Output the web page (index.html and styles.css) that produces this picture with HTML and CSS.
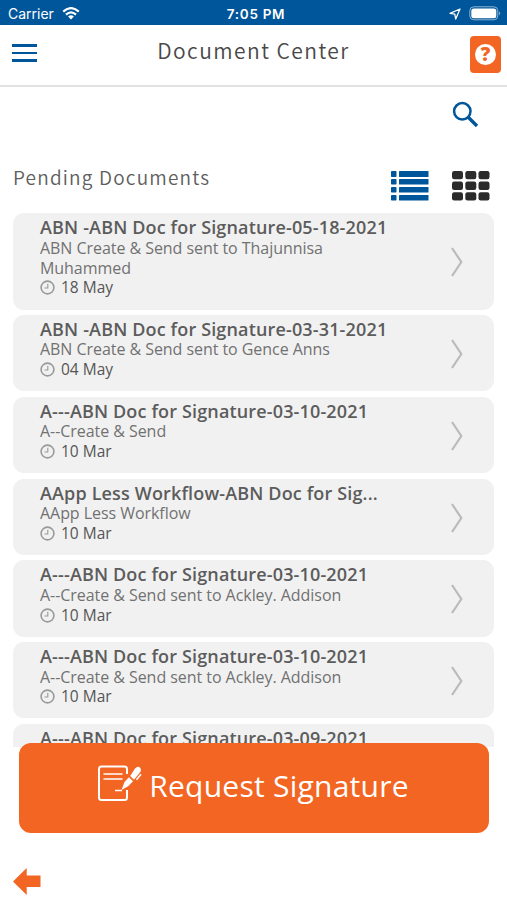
FILE: index.html
```html
<!DOCTYPE html>
<html lang="en">
<head>
    <meta charset="UTF-8">
    <meta name="viewport" content="width=device-width, initial-scale=1.0">
    <title>Document Center</title>
    <link rel="stylesheet" href="styles.css">
</head>
<body>
    <div class="status-bar">
        <div class="status-left">
            <span class="carrier">Carrier</span>
            <svg class="wifi" width="18" height="13" viewBox="0 0 18 13" fill="none" stroke="#fff" stroke-width="2.2">
                <path d="M1.2 4.6Q9-2.4 16.8 4.6"/>
                <path d="M4 7.6Q9 3.2 14 7.6"/>
                <path d="M9 12.4L6.1 9.5Q9 7.1 11.9 9.5Z" fill="#fff" stroke="none"/>
            </svg>
        </div>
        <span class="time">7:05 PM</span>
        <div class="status-right">
            <svg width="12" height="12" viewBox="0 0 12 12" fill="none" stroke="#fff" stroke-width="1.3" stroke-linejoin="round"><path d="M11 1L1 5.3L5.8 6.1L6.7 11Z"/></svg>
            <svg width="32" height="15" viewBox="0 0 32 15">
                <rect x="0.8" y="0.8" width="28" height="13" rx="4" fill="none" stroke="#fff" stroke-opacity=".55" stroke-width="1"/>
                <rect x="2.3" y="2.4" width="25" height="9.8" rx="2.5" fill="#fff"/>
                <path d="M30.2 5.2Q32.2 7.3 30.2 9.4Z" fill="#fff" fill-opacity=".6"/>
            </svg>
        </div>
    </div>

    <header class="header">
        <div class="menu">
            <span></span>
            <span></span>
            <span></span>
        </div>
        <h1>Document Center</h1>
        <div class="help"><span>?</span></div>
    </header>

    <div class="search-row">
        <svg width="27" height="27" viewBox="0 0 27 27" fill="none" stroke="#00569a">
            <circle cx="10.3" cy="10.3" r="8.2" stroke-width="2.5"/>
            <path d="M16 16L25 25" stroke-width="3.4"/>
        </svg>
    </div>

    <div class="list-header">
        <h2>Pending Documents</h2>
        <div class="views">
            <svg width="38" height="30" viewBox="0 0 38 30" fill="#00569a">
                <rect x="0" y="0" width="5.5" height="6" rx=".8"/><rect x="8" y="0" width="29.5" height="6" rx=".5"/>
                <rect x="0" y="8" width="5.5" height="5.5" rx=".8"/><rect x="8" y="8" width="29.5" height="5.5" rx=".5"/>
                <rect x="0" y="16" width="5.5" height="5.5" rx=".8"/><rect x="8" y="16" width="29.5" height="5.5" rx=".5"/>
                <rect x="0" y="24" width="5.5" height="5.5" rx=".8"/><rect x="8" y="24" width="29.5" height="5.5" rx=".5"/>
            </svg>
            <svg width="38" height="30" viewBox="0 0 38 30" fill="#2b2b2b">
                <rect x="0" y="0" width="11" height="8.3" rx="2.2"/><rect x="13.3" y="0" width="11" height="8.3" rx="2.2"/><rect x="26.5" y="0" width="11" height="8.3" rx="2.2"/>
                <rect x="0" y="10.6" width="11" height="8.3" rx="2.2"/><rect x="13.3" y="10.6" width="11" height="8.3" rx="2.2"/><rect x="26.5" y="10.6" width="11" height="8.3" rx="2.2"/>
                <rect x="0" y="21.2" width="11" height="8.3" rx="2.2"/><rect x="13.3" y="21.2" width="11" height="8.3" rx="2.2"/><rect x="26.5" y="21.2" width="11" height="8.3" rx="2.2"/>
            </svg>
        </div>
    </div>

    <div class="documents" id="documents"></div>

    <button class="request">
        <svg width="44" height="37" viewBox="0 0 44 37" fill="none" stroke="#fff" stroke-width="2">
            <path d="M29 9V4Q29 1.5 26.5 1.5H3.5Q1 1.5 1 4V32.5Q1 35 3.5 35H26.5Q29 35 29 32.5V25"/>
            <path d="M5.5 9H24.5M5.5 14H24.5M17 25.5H24" stroke-width="1.7"/>
            <path d="M23.5 25L26.5 17L31 12.3L35 16.3L30.5 21Z" fill="#fff" stroke="none"/>
            <path d="M32.2 11L37 3.5Q40 .4 42.3 3Q44 5.4 41.5 8L36 14.8Z" fill="#fff" stroke="none"/>
            <path d="M38.5 14.7L43 9.3" stroke-width="1.6"/>
        </svg>
        <span>Request Signature</span>
    </button>

    <footer class="footer">
        <svg width="28" height="27" viewBox="0 0 28 27" fill="#f36522"><path d="M0 13.5L13.7 0V7.5H27.5V19H13.7V27Z"/></svg>
    </footer>

    <script>
        const documents = [
            { title: "ABN -ABN Doc for Signature-05-18-2021", info: "ABN Create & Send sent to Thajunnisa Muhammed", date: "18 May" },
            { title: "ABN -ABN Doc for Signature-03-31-2021", info: "ABN Create & Send sent to Gence Anns", date: "04 May" },
            { title: "A---ABN Doc for Signature-03-10-2021", info: "A--Create & Send", date: "10 Mar" },
            { title: "AApp Less Workflow-ABN Doc for Sig...", info: "AApp Less Workflow", date: "10 Mar" },
            { title: "A---ABN Doc for Signature-03-10-2021", info: "A--Create & Send sent to Ackley. Addison", date: "10 Mar" },
            { title: "A---ABN Doc for Signature-03-10-2021", info: "A--Create & Send sent to Ackley. Addison", date: "10 Mar" },
            { title: "A---ABN Doc for Signature-03-09-2021", info: "", date: "" }
        ];

        function renderDocument(doc) {
            const card = document.createElement("div");
            card.className = "card";
            card.innerHTML = `
                <div class="card-text">
                    <div class="card-title">${doc.title}</div>
                    <div class="card-info">${doc.info.replace("&", "&amp;")}</div>
                    ${doc.date ? `<div class="card-date">
                        <svg width="15" height="15" viewBox="0 0 15 15" fill="none" stroke="#999"><circle cx="7.5" cy="7.5" r="6.4" stroke-width="1.6"/><path d="M7.8 3.8V8H4.5" stroke-width="1.1"/></svg>
                        <span>${doc.date}</span>
                    </div>` : ""}
                </div>
                <svg class="arrow" width="12" height="30" viewBox="0 0 12 30" fill="none" stroke="#bababa" stroke-width="2.2"><path d="M1 1L10.3 15L1 29"/></svg>
            `;
            document.getElementById("documents").appendChild(card);
        }

        documents.forEach(renderDocument);
    </script>
</body>
</html>
```
FILE: styles.css
```css
* {
    box-sizing: border-box;
}
body {
    margin: 0;
    height: 900px;
    overflow: hidden;
    display: flex;
    flex-direction: column;
    background-color: #fff;
    font-family: "Open Sans", sans-serif;
    color: #555;
}
svg {
    display: block;
    flex-shrink: 0;
}
h1, h2 {
    margin: 0;
    font-family: "Noto Sans CJK SC", "Open Sans", sans-serif;
    font-weight: 350;
    white-space: nowrap;
}
.status-bar {
    display: grid;
    grid-template-columns: 1fr auto 1fr;
    align-items: center;
    height: 25px;
    padding: 2px 6px 0 8px;
    background-color: #00569a;
    color: #fff;
    font-family: Inter, sans-serif;
    font-size: 14px;
}
.status-left, .status-right {
    display: flex;
    align-items: center;
    gap: 8px;
}
.status-right {
    justify-content: flex-end;
}
.time {
    padding-left: 3px;
    font-weight: 600;
    font-size: 13.5px;
    letter-spacing: 0.7px;
}
.header {
    display: flex;
    justify-content: space-between;
    height: 62px;
    padding: 0 6px 0 12px;
    border-bottom: 2px solid #e2e2e2;
}
.menu {
    display: flex;
    flex-direction: column;
    gap: 5px;
    width: 31px;
    padding: 19px 6px 0 0;
}
.menu span {
    height: 2.5px;
    background-color: #00569a;
}
.header h1 {
    padding: 9px 6px 0 0;
    font-size: 21px;
    line-height: 32px;
    letter-spacing: 1.45px;
    color: #484848;
}
.help {
    display: flex;
    align-items: center;
    justify-content: center;
    width: 31px;
    height: 37px;
    margin-top: 11px;
    border-radius: 4px;
    background-color: #f36522;
}
.help span {
    width: 21px;
    height: 21px;
    border-radius: 50%;
    background-color: #fff;
    color: #f36522;
    font-size: 19px;
    font-weight: 800;
    line-height: 21px;
    text-align: center;
}
.search-row {
    display: flex;
    justify-content: flex-end;
    height: 71px;
    padding: 14px 28px 0 0;
}
.list-header {
    display: flex;
    justify-content: space-between;
    height: 55.4px;
    padding: 0 17px 0 13px;
}
.list-header h2 {
    padding-top: 5px;
    font-size: 19px;
    line-height: 28px;
    letter-spacing: 1.2px;
    color: #5e5e5e;
}
.views {
    display: flex;
    gap: 23px;
    padding-top: 13px;
}
.documents {
    display: flex;
    flex-direction: column;
    gap: 5.4px;
    height: 533.6px;
    padding: 0 13px;
    flex-shrink: 0;
    overflow: hidden;
}
.card {
    display: flex;
    align-items: center;
    justify-content: space-between;
    flex-shrink: 0;
    min-height: 76.4px;
    padding: 4px 31px 11.3px 27px;
    border-radius: 11px;
    background-color: #f1f1f1;
}
.card-text {
    width: 352px;
    align-self: flex-start;
}
.card-title {
    margin-bottom: 1.5px;
    font-size: 18px;
    font-weight: 600;
    line-height: 20px;
    letter-spacing: 0.15px;
    white-space: nowrap;
    color: #5c5c5c;
}
.card-info {
    width: 310px;
    font-size: 16px;
    line-height: 19.8px;
    letter-spacing: -0.05px;
    color: #717171;
}
.card-date {
    display: flex;
    align-items: center;
    gap: 6px;
    font-size: 15.5px;
    line-height: 19.8px;
}
.card-date svg {
    margin-top: -1px;
}
.arrow {
    margin-top: 9px;
}
.request {
    display: flex;
    align-items: center;
    justify-content: center;
    gap: 7px;
    flex-shrink: 0;
    height: 90px;
    margin: -4px 18px 0 19px;
    padding: 0 6px 5px 5px;
    border: 0;
    border-radius: 12px;
    background-color: #f36522;
    color: #fff;
    font-family: "Open Sans", sans-serif;
    font-size: 30px;
    letter-spacing: 0.25px;
    position: relative;
}
.request svg {
    margin-top: -3px;
}
.footer {
    padding: 35px 13px 0;
}
```
